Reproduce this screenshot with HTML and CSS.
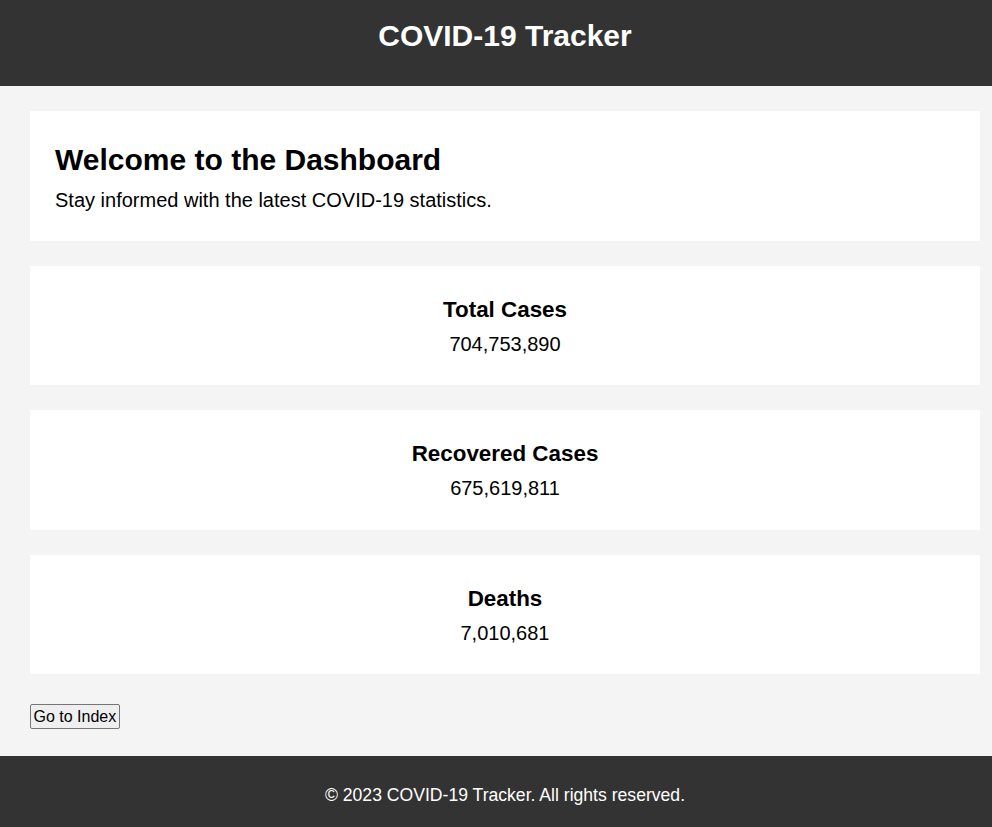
FILE: index.html
```html
<!DOCTYPE html>
<html lang="en">
<head>
<meta charset="utf-8">
<title>COVID-19 Tracker</title>
<link rel="stylesheet" href="styles.css">
</head>
<body>
<header class="site-header">
  <h1 class="site-title">COVID-19 Tracker</h1>
</header>
<main class="main">
  <section class="card welcome">
    <h2 class="welcome-title">Welcome to the Dashboard</h2>
    <p class="welcome-text">Stay informed with the latest COVID-19 statistics.</p>
  </section>
  <section class="card stat">
    <h3 class="stat-title">Total Cases</h3>
    <p class="stat-value">704,753,890</p>
  </section>
  <section class="card stat">
    <h3 class="stat-title">Recovered Cases</h3>
    <p class="stat-value">675,619,811</p>
  </section>
  <section class="card stat">
    <h3 class="stat-title">Deaths</h3>
    <p class="stat-value">7,010,681</p>
  </section>
  <div class="actions">
    <button class="index-btn" type="button">Go to Index</button>
  </div>
</main>
<footer class="site-footer">
  <p class="footer-text">&copy; 2023 COVID-19 Tracker. All rights reserved.</p>
</footer>
</body>
</html>
```
FILE: styles.css
```css
* { box-sizing: border-box; }
html, body { margin: 0; padding: 0; }
body {
  font-family: "Liberation Sans", Arial, sans-serif;
  background: #f4f4f4;
  color: #000;
  width: 992px;
  min-height: 827px;
  display: flex;
  flex-direction: column;
}
.site-header {
  background: #333;
  color: #fff;
  height: 86px;
  flex-shrink: 0;
  padding: 18px 12px 0 30px;
  text-align: center;
}
.site-title {
  margin: 0;
  font-size: 30px;
  line-height: 36px;
  font-weight: bold;
}
.main {
  flex: 1;
  display: flex;
  flex-direction: column;
  gap: 25px;
  padding: 25px 12px 26.5px 30px;
}
.card {
  background: #fff;
  flex-shrink: 0;
}
.welcome {
  height: 130px;
  padding: 32px 25px 0;
}
.welcome-title {
  margin: 0 0 11px;
  font-size: 30px;
  line-height: 34.5px;
  font-weight: bold;
}
.welcome-text {
  margin: 0;
  font-size: 20px;
  line-height: 23px;
}
.stat {
  height: 119.4px;
  padding: 31px 20px 0;
  text-align: center;
}
.stat-title {
  margin: 0 0 10px;
  font-size: 22.4px;
  line-height: 26px;
  font-weight: bold;
}
.stat-value {
  margin: 0;
  font-size: 20px;
  line-height: 23px;
}
.actions {
  margin-top: 5px;
}
.index-btn {
  font-family: "Liberation Sans", Arial, sans-serif;
  font-size: 16px;
  line-height: 19px;
  height: 25px;
  padding: 2px 2.5px;
  border: 1px solid #767676;
  border-radius: 2px;
  background: #efefef;
  color: #000;
}
.site-footer {
  background: #333;
  color: #fff;
  height: 71px;
  flex-shrink: 0;
  text-align: center;
  padding: 29px 12px 0 30px;
}
.footer-text {
  margin: 0;
  font-size: 17.6px;
  line-height: 20px;
}
```
